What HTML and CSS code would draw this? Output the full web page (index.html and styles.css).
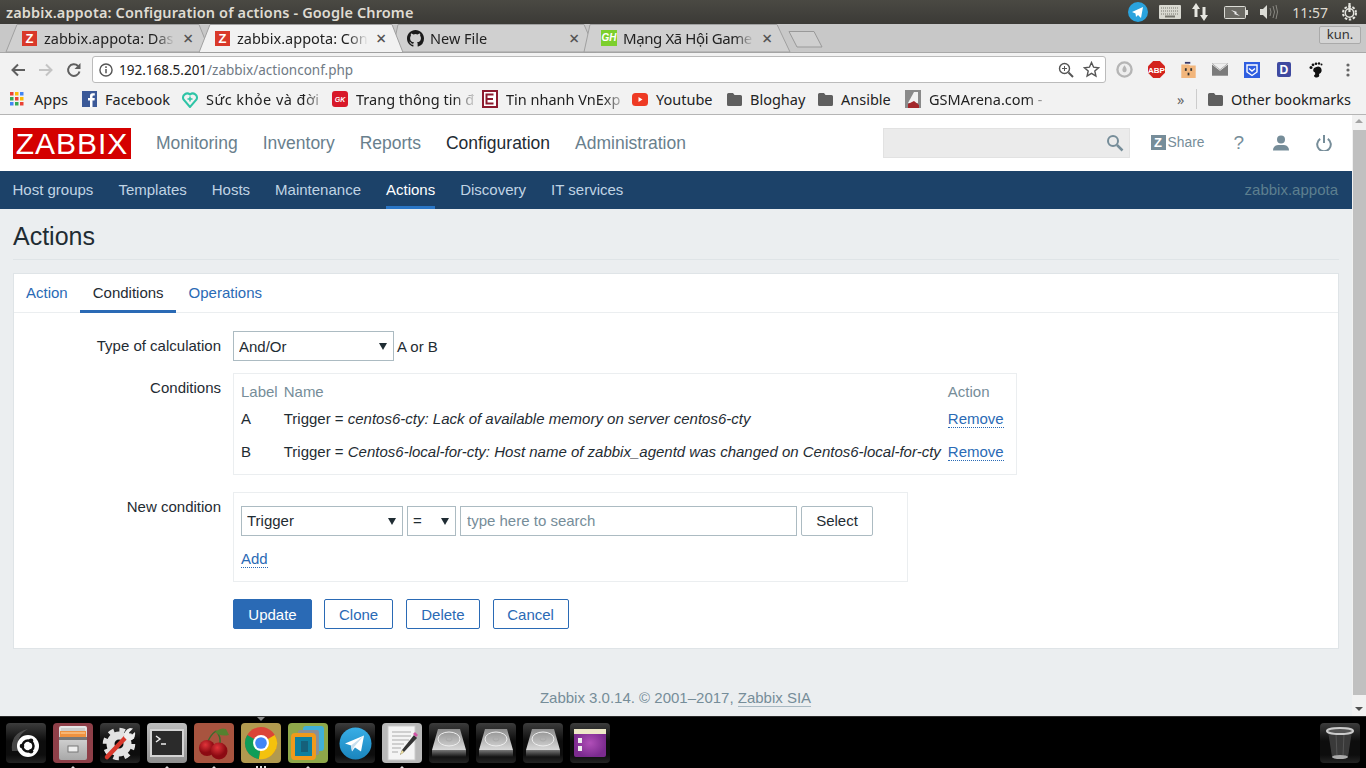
FILE: index.html
```html
<!DOCTYPE html>
<html>
<head>
    <title>zabbix.appota: Configuration of actions</title>
    <link rel="stylesheet" href="styles.css">
</head>
<body>

  <!-- shared gradients for the dock icons -->
  <svg class="defs" width="0" height="0">
    <defs>
      <linearGradient id="driveTop" x1="0" y1="0" x2="0" y2="1"><stop offset="0" stop-color="#8d8d8d"/><stop offset="1" stop-color="#e4e4e4"/></linearGradient>
      <linearGradient id="driveBase" x1="0" y1="0" x2="0" y2="1"><stop offset="0" stop-color="#777"/><stop offset="1" stop-color="#111"/></linearGradient>
      <radialGradient id="purple"><stop offset="0" stop-color="#b04fb8"/><stop offset="1" stop-color="#7c2b8f"/></radialGradient>
      <radialGradient id="cherry" cx=".4" cy=".3"><stop offset="0" stop-color="#e0343a"/><stop offset="1" stop-color="#8c0a12"/></radialGradient>
      <linearGradient id="tgBlue" x1="0" y1="0" x2="0" y2="1"><stop offset="0" stop-color="#38aee6"/><stop offset="1" stop-color="#1a85bd"/></linearGradient>
      <linearGradient id="cabinet" x1="0" y1="0" x2="0" y2="1"><stop offset="0" stop-color="#e8e8e8"/><stop offset="1" stop-color="#a8a8a8"/></linearGradient>
    </defs>
  </svg>

  <!-- desktop top panel -->
  <div class="panel">
    <div class="panel-title">zabbix.appota: Configuration of actions - Google Chrome</div>
    <div class="tray">
      <svg class="tray-ico" width="20" height="20" viewBox="0 0 20 20"><circle cx="10" cy="10" r="10" fill="#2aa3de"/><path d="M4 10l11-5-2 11-3-3-2 2-.5-3.500z" fill="#fff"/></svg>
      <svg class="tray-ico tray-kb" width="22" height="14" viewBox="0 0 22 14"><rect width="22" height="14" rx="1" fill="#d8d8d0"/><path d="M2 3h18M2 6h18M2 9h18" stroke="#77776f" stroke-dasharray="1 1"/><rect x="6" y="10.500" width="10" height="2" fill="#77776f"/></svg>
      <svg class="tray-ico tray-net" width="18" height="20" viewBox="0 0 18 20"><path d="M5 1l4 6H6.500v8h-3V7H1zM13 19l4-6h-2.500V5h-3v8H9z" fill="#e6e6e0"/></svg>
      <svg class="tray-ico tray-bat" width="24" height="13" viewBox="0 0 24 13"><rect x=".5" y=".5" width="21" height="12" rx="1" fill="#6b6a64" stroke="#dcdcd6"/><rect x="22" y="4" width="2" height="5" fill="#dcdcd6"/><path d="M7 4l6 2-1 1 4 3-6-2 1-1z" fill="#eee"/></svg>
      <svg class="tray-ico tray-vol" width="20" height="16" viewBox="0 0 20 16"><path d="M1 5h3l4-4v14l-4-4H1z" fill="#dcdcd6"/><path d="M11 4q2 4 0 8M14 2q3 6 0 12M17 1q3 7 0 14" stroke="#8b8a84" fill="none"/></svg>
      <span class="clock">11:57</span>
      <svg class="tray-ico tray-cog" width="17" height="18" viewBox="0 0 17 18"><circle cx="8.500" cy="10" r="6.500" fill="none" stroke="#e6e6e0" stroke-width="2" stroke-dasharray="2.500 1.600"/><circle cx="8.500" cy="10" r="4.200" fill="none" stroke="#e6e6e0" stroke-width="1.500"/><path d="M8.500 0v9" stroke="#e6e6e0" stroke-width="2.200"/></svg>
    </div>
  </div>

  <!-- tab strip -->
  <div class="tabstrip">
    <svg class="tabshapes" width="830" height="29" viewBox="0 0 830 29">
      <polygon points="6,28 17,.5 199,.5 210,28" fill="#d0d0d0" stroke="#a0a0a0"/>
      <polygon points="392,28 398,.5 584,.5 596,28" fill="#d0d0d0" stroke="#a0a0a0"/>
      <polygon points="584,28 590,.5 777,.5 790,28" fill="#d0d0d0" stroke="#a0a0a0"/>
      <polygon points="199,28.500 210,.5 392,.5 403,28.500" fill="#f2f2f2" stroke="#a0a0a0"/>
      <polygon points="789,7.500 814,7.500 822,23 797,23" fill="#cfcfcf" stroke="#999"/>
    </svg>
    <div class="tab">
      <span class="fav-z">Z</span><span class="tab-title">zabbix.appota: Das</span><span class="tab-x">×</span>
    </div>
    <div class="tab">
      <span class="fav-z">Z</span><span class="tab-title">zabbix.appota: Con</span><span class="tab-x">×</span>
    </div>
    <div class="tab">
      <svg class="fav" width="17" height="17" viewBox="0 0 16 16"><path fill="#1b1b1b" d="M8 0C3.580 0 0 3.580 0 8c0 3.540 2.290 6.530 5.470 7.590.4.070.55-.17.55-.38v-1.340c-2.230.48-2.690-1.070-2.690-1.070-.36-.92-.89-1.170-.89-1.170-.73-.5.050-.49.050-.49.800.06 1.230.820 1.230.820.710 1.220 1.870.870 2.330.660.070-.520.280-.870.510-1.070-1.780-.2-3.640-.890-3.640-3.950 0-.870.310-1.590.820-2.150-.080-.2-.360-1.020.080-2.120 0 0 .670-.210 2.200.820a7.600 7.600 0 0 1 4 0c1.530-1.040 2.200-.820 2.200-.820.440 1.100.160 1.920.080 2.120.510.560.820 1.270.820 2.150 0 3.070-1.870 3.750-3.650 3.950.290.250.540.730.540 1.480v2.190c0 .210.150.460.550.380A8 8 0 0 0 16 8c0-4.420-3.580-8-8-8z"/></svg><span class="tab-title">New File</span><span class="tab-x">×</span>
    </div>
    <div class="tab">
      <span class="fav-gh">GH</span><span class="tab-title tab-big">Mạng Xã Hội Game</span><span class="tab-x">×</span>
    </div>
    <div class="profile">kun.</div>
  </div>

  <!-- address bar -->
  <div class="toolbar">
    <svg class="nav-ico" width="16" height="16" viewBox="0 0 16 16"><path d="M15 8H3M8 2.500L2.500 8 8 13.500" fill="none" stroke="#5f5f5f" stroke-width="2"/></svg>
    <svg class="nav-ico" width="16" height="16" viewBox="0 0 16 16"><path d="M1 8h12M8 2.500L13.500 8 8 13.500" fill="none" stroke="#c4c4c4" stroke-width="2"/></svg>
    <svg class="nav-ico" width="16" height="16" viewBox="0 0 16 16"><path d="M13.500 9.500A5.800 5.800 0 1 1 12 4" fill="none" stroke="#5f5f5f" stroke-width="2"/><path d="M14.500 1v6h-6z" fill="#5f5f5f"/></svg>
    <div class="omnibox">
      <svg class="info" width="14" height="14" viewBox="0 0 15 15"><circle cx="7.500" cy="7.500" r="6.500" fill="none" stroke="#555" stroke-width="1.500"/><path d="M7.500 6.500v4.500M7.500 3.500v1.800" stroke="#555" stroke-width="1.600"/></svg>
      <span class="url">192.168.5.201<span class="url-path">/zabbix/actionconf.php</span></span>
      <svg class="box-ico" width="16" height="16" viewBox="0 0 16 16"><circle cx="6.500" cy="6.500" r="5" fill="none" stroke="#555" stroke-width="1.400"/><path d="M10.500 10.500L15 15" stroke="#555" stroke-width="2"/><path d="M4 6.500h5M6.500 4v5" stroke="#555"/></svg>
      <svg class="box-ico" width="17" height="17" viewBox="0 0 17 17"><path d="M8.500 1.500l2.100 4.700 5 .5-3.800 3.300 1.100 5-4.400-2.600L4.100 15l1.100-5L1.400 6.700l5-.5z" fill="none" stroke="#555" stroke-width="1.400"/></svg>
    </div>
    <div class="ext-row">
      <svg width="17" height="17" viewBox="0 0 18 18"><circle cx="9" cy="9" r="7.500" fill="#eee" stroke="#b5b5b5" stroke-width="2.500"/><path d="M9 4.500q3 4 2 6a2.200 2.200 0 0 1-4 0q-1-2 2-6z" fill="#b5b5b5"/></svg>
      <svg width="17" height="17" viewBox="0 0 18 18"><polygon points="5.500,0 12.500,0 18,5.500 18,12.500 12.500,18 5.500,18 0,12.500 0,5.500" fill="#d3231c"/><text x="9" y="12.500" class="abp">ABP</text></svg>
      <svg width="15" height="18" viewBox="0 0 16 20"><path d="M0 4h8l2 1h6v14H0z" fill="#f2b67c"/><rect x="4" y="1" width="6" height="2" fill="#3a3a6a"/><rect x="4" y="8" width="2" height="3" fill="#333"/><rect x="10" y="8" width="2" height="3" fill="#333"/><rect x="7" y="13" width="2" height="3" fill="#333"/></svg>
      <svg width="16" height="13" viewBox="0 0 18 14"><rect width="18" height="14" fill="#7c7c7c"/><path d="M0 0l9 7 9-7z" fill="#efefef"/><path d="M0 1l9 7 9-7" fill="none" stroke="#efefef"/></svg>
      <svg width="16" height="16" viewBox="0 0 16 16"><rect width="16" height="16" fill="#2f5ee0"/><path d="M3 3h10v7l-5 3.500L3 10z" fill="none" stroke="#fff" stroke-width="1.400"/><path d="M5 6.500l3 2.500 3-2.500" fill="none" stroke="#fff" stroke-width="1.400"/></svg>
      <svg width="14" height="15" viewBox="0 0 15 16"><rect width="15" height="16" rx="2" fill="#3f4aa0"/><text x="7.500" y="13" class="ext-d">D</text></svg>
      <svg width="14" height="16" viewBox="0 0 14 16"><path d="M5 6q5-3 7 0 2 4-2 6 1 3-2 3.500-3 0-3-2 2-1 1-3-3-1-1-4.500z" fill="#111"/><circle cx="2" cy="5.500" r="1.500" fill="#111"/><circle cx="4" cy="2.800" r="1.400" fill="#111"/><circle cx="7" cy="1.800" r="1.300" fill="#111"/><circle cx="10" cy="1.500" r="1.200" fill="#111"/><circle cx="12.500" cy="2.500" r="1" fill="#111"/></svg>
      <svg width="4" height="14" viewBox="0 0 4 14"><circle cx="2" cy="2" r="1.600" fill="#666"/><circle cx="2" cy="7" r="1.600" fill="#666"/><circle cx="2" cy="12" r="1.600" fill="#666"/></svg>
    </div>
  </div>

  <!-- bookmarks -->
  <div class="bookmarks">
    <div class="bm bm-apps">
      <svg width="14" height="14" viewBox="0 0 14 14"><rect width="3.500" height="3.500" fill="#ea4335"/><rect x="5" width="3.500" height="3.500" fill="#fbbc05"/><rect x="10" width="3.500" height="3.500" fill="#4285f4"/><rect y="5" width="3.500" height="3.500" fill="#34a853"/><rect x="5" y="5" width="3.500" height="3.500" fill="#ea4335"/><rect x="10" y="5" width="3.500" height="3.500" fill="#fbbc05"/><rect y="10" width="3.500" height="3.500" fill="#4285f4"/><rect x="5" y="10" width="3.500" height="3.500" fill="#34a853"/><rect x="10" y="10" width="3.500" height="3.500" fill="#ea4335"/></svg>
      <span>Apps</span>
    </div>
    <div class="bm bm-fb">
      <svg width="15" height="16" viewBox="0 0 15 16"><rect width="15" height="16" fill="#3b5998"/><path d="M10.500 16V9.500h2l.3-2.500h-2.300V5.500q0-1 1-1h1.300V2.300H10.500Q8 2.300 8 5v2H6v2.500h2V16z" fill="#fff"/></svg>
      <span>Facebook</span>
    </div>
    <div class="bm bm-sk">
      <svg width="16" height="18" viewBox="0 0 16 18"><path d="M8 17L1.500 9.500a4.200 4.200 0 0 1 6.500-5 4.200 4.200 0 0 1 6.500 5z" fill="none" stroke="#2ec4a6" stroke-width="2"/><path d="M8 6.500v5M5.500 9h5" stroke="#2ec4a6" stroke-width="1.500"/></svg>
      <span class="bm-fade">Sức khỏe và đời</span>
    </div>
    <div class="bm bm-tt">
      <svg width="16" height="16" viewBox="0 0 16 16"><rect width="16" height="16" rx="3" fill="#d8192a"/><text x="8" y="11" class="gk">GK</text></svg>
      <span class="bm-fade">Trang thông tin đ</span>
    </div>
    <div class="bm bm-vn">
      <svg width="16" height="18" viewBox="0 0 16 18"><rect x="1" y="1" width="14" height="16" fill="#fff" stroke="#8c1a2e" stroke-width="2"/><path d="M11.500 4.500h-7v9h7M5 9h6" fill="none" stroke="#8c1a2e" stroke-width="2"/></svg>
      <span class="bm-fade">Tin nhanh VnExp</span>
    </div>
    <div class="bm bm-yt">
      <svg width="16" height="13" viewBox="0 0 16 13"><rect width="16" height="13" rx="3.500" fill="#ee3a24"/><path d="M6.500 4v5l4-2.500z" fill="#fff"/></svg>
      <span>Youtube</span>
    </div>
    <div class="bm bm-bl">
      <svg width="15" height="13" viewBox="0 0 15 13"><path d="M0 1.500Q0 0 1.500 0H6l1.500 2h6Q15 2 15 3.500v8q0 1.500-1.500 1.500h-12Q0 13 0 11.500z" fill="#5f5f5f"/></svg>
      <span>Bloghay</span>
    </div>
    <div class="bm bm-an">
      <svg width="15" height="13" viewBox="0 0 15 13"><path d="M0 1.500Q0 0 1.500 0H6l1.500 2h6Q15 2 15 3.500v8q0 1.500-1.500 1.500h-12Q0 13 0 11.500z" fill="#5f5f5f"/></svg>
      <span>Ansible</span>
    </div>
    <div class="bm bm-gsm">
      <svg width="16" height="18" viewBox="0 0 16 18"><rect width="16" height="18" fill="#8a8a8a"/><path d="M3 13l6-11h4v11z" fill="#f2f2f2"/><path d="M3 14l6-3 5 4v3H3z" fill="#a3272b"/></svg>
      <span class="bm-fade">GSMArena.com -</span>
    </div>
    <div class="bm-more">»</div>
    <div class="bm-sep"></div>
    <div class="bm bm-other">
      <svg width="15" height="13" viewBox="0 0 15 13"><path d="M0 1.500Q0 0 1.500 0H6l1.500 2h6Q15 2 15 3.500v8q0 1.500-1.500 1.500h-12Q0 13 0 11.500z" fill="#5f5f5f"/></svg>
      <span>Other bookmarks</span>
    </div>
  </div>

  <!-- browser viewport with the zabbix page -->
  <div class="viewport">
    <div class="page">
      <header class="top-nav">
        <div class="logo">ZABBIX</div>
        <a class="top-item">Monitoring</a>
        <a class="top-item">Inventory</a>
        <a class="top-item">Reports</a>
        <a class="top-item top-active">Configuration</a>
        <a class="top-item">Administration</a>
        <div class="top-right">
          <div class="search">
            <svg width="18" height="18" viewBox="0 0 18 18"><circle cx="7" cy="7" r="5" fill="none" stroke="#768d99" stroke-width="2"/><path d="M11 11l5.500 5.500" stroke="#768d99" stroke-width="2.500"/></svg>
          </div>
          <div class="share"><span class="share-z">Z</span>Share</div>
          <div class="help">?</div>
          <svg class="user-ico" width="16" height="16" viewBox="0 0 16 16"><circle cx="8" cy="4.500" r="4" fill="#768d99"/><path d="M0 15.500q0-5 5-5.500h6q5 .5 5 5.500z" fill="#768d99"/></svg>
          <svg class="power-ico" width="16" height="16" viewBox="0 0 16 16"><path d="M4.200 3.800a6.800 6.800 0 1 0 7.600 0" fill="none" stroke="#768d99" stroke-width="2"/><path d="M8 0v8" stroke="#768d99" stroke-width="2"/></svg>
        </div>
      </header>

      <nav class="sub-nav">
        <a class="sub-item">Host groups</a>
        <a class="sub-item">Templates</a>
        <a class="sub-item">Hosts</a>
        <a class="sub-item">Maintenance</a>
        <a class="sub-item sub-active">Actions</a>
        <a class="sub-item">Discovery</a>
        <a class="sub-item">IT services</a>
        <span class="server-name">zabbix.appota</span>
      </nav>

      <main class="content">
        <h1 class="page-title">Actions</h1>

        <div class="card">
          <div class="card-tabs">
            <a class="card-tab">Action</a>
            <a class="card-tab card-tab-on">Conditions</a>
            <a class="card-tab">Operations</a>
          </div>

          <div class="form">
            <div class="form-label">Type of calculation</div>
            <div class="form-field calc-field">
              <div class="select-wrap select-calc"><select><option>And/Or</option></select></div>
              <span>A or B</span>
            </div>

            <div class="form-label">Conditions</div>
            <div class="form-field">
              <div class="box box-cond">
                <table class="cond-table">
                  <thead>
                    <tr><th>Label</th><th>Name</th><th>Action</th></tr>
                  </thead>
                  <tbody>
                    <tr>
                      <td>A</td>
                      <td>Trigger = <i>centos6-cty: Lack of available memory on server centos6-cty</i></td>
                      <td><a class="dotted">Remove</a></td>
                    </tr>
                    <tr>
                      <td>B</td>
                      <td>Trigger = <i>Centos6-local-for-cty: Host name of zabbix_agentd was changed on Centos6-local-for-cty</i></td>
                      <td><a class="dotted">Remove</a></td>
                    </tr>
                  </tbody>
                </table>
              </div>
            </div>

            <div class="form-label label-new">New condition</div>
            <div class="form-field">
              <div class="box box-new">
                <div class="new-row">
                  <div class="select-wrap select-trigger"><select><option>Trigger</option></select></div>
                  <div class="select-wrap select-eq"><select><option>=</option></select></div>
                  <input class="search-input" type="text" placeholder="type here to search">
                  <button class="btn btn-select">Select</button>
                </div>
                <a class="dotted add-link">Add</a>
              </div>
            </div>

            <div class="form-label"></div>
            <div class="form-field btn-row">
              <button class="btn btn-main">Update</button>
              <button class="btn">Clone</button>
              <button class="btn btn-gap">Delete</button>
              <button class="btn btn-gap btn-cancel">Cancel</button>
            </div>
          </div>
        </div>
      </main>

      <footer class="foot">Zabbix 3.0.14. © 2001–2017, <a class="foot-link">Zabbix SIA</a></footer>
    </div>

    <div class="scrollbar">
      <div class="arrow-up"></div>
      <div class="thumb"></div>
      <div class="arrow-down"></div>
    </div>
  </div>

  <!-- dock -->
  <div class="dock">
    <div class="tile tile-dark">
      <svg width="36" height="36" viewBox="0 0 36 36"><path d="M4 26Q2 8 20 4 8 10 10 26z" fill="#6a6a6a" opacity=".6"/><circle cx="20" cy="21" r="11" fill="#fff"/><circle cx="20" cy="21" r="5.500" fill="none" stroke="#111" stroke-width="2.500"/><circle cx="14" cy="21" r="2.300" fill="#111"/><circle cx="23" cy="15.800" r="2.300" fill="#111"/><circle cx="23" cy="26.200" r="2.300" fill="#111"/></svg>
    </div>
    <div class="tile tile-red running">
      <svg width="34" height="36" viewBox="0 0 34 36"><rect x="3" y="1" width="28" height="34" rx="2" fill="url(#cabinet)"/><rect x="5" y="3" width="24" height="3" fill="#ccc"/><rect x="4" y="6" width="26" height="6" fill="#ef9240"/><path d="M5 8h24" stroke="#ffd9a8"/><rect x="3" y="12" width="28" height="3" fill="#777"/><rect x="12" y="21" width="10" height="6" fill="#eee" stroke="#777"/></svg>
    </div>
    <div class="tile tile-dark">
      <svg width="36" height="36" viewBox="0 0 36 36"><circle cx="17" cy="19" r="8.500" fill="none" stroke="#e2e2e2" stroke-width="8"/><circle cx="17" cy="19" r="14" fill="none" stroke="#e2e2e2" stroke-width="4.500" stroke-dasharray="5.500 5.500"/><path d="M5 32L24 12" stroke="#d8382c" stroke-width="4.500" stroke-linecap="round"/><path d="M22 12q0-7 6-9l3 .5-4 4 2 3 4-3.500q1 5-3 8-3 1-5 0z" fill="#eee"/></svg>
    </div>
    <div class="tile tile-grey running">
      <svg width="34" height="28" viewBox="0 0 34 28"><rect x="1" y="1" width="32" height="26" fill="#2b2b2b" stroke="#d4d4d4" stroke-width="2"/><path d="M6 7l4 3-4 3" fill="none" stroke="#eee" stroke-width="1.500"/><path d="M11 15h5" stroke="#eee" stroke-width="1.500"/></svg>
    </div>
    <div class="tile tile-brick running">
      <svg width="34" height="34" viewBox="0 0 34 34"><path d="M10 18Q13 9 19 5M23 18Q24 10 19 5" fill="none" stroke="#3d6a2e" stroke-width="1.500"/><path d="M18 6q6-5 11-3 2 4 3 6-9 2-14-3z" fill="#55802f"/><circle cx="10" cy="22" r="8" fill="url(#cherry)"/><circle cx="22" cy="25" r="8.500" fill="url(#cherry)"/></svg>
    </div>
    <div class="tile tile-olive running-3">
      <svg width="34" height="34" viewBox="0 0 32 32"><circle cx="16" cy="16" r="15" fill="#db4437"/><path d="M16 16L29 8.500A15 15 0 0 1 14 31z" fill="#f4c20d"/><path d="M16 16L14 31A15 15 0 0 1 3 8.500z" fill="#0f9d58"/><circle cx="16" cy="16" r="7.500" fill="#fff"/><circle cx="16" cy="16" r="5.500" fill="#4285f4"/></svg>
    </div>
    <div class="tile tile-green running">
      <svg width="34" height="36" viewBox="0 0 34 36"><rect x="12" y="1" width="21" height="25" fill="#41b0d8" rx="3"/><rect x="7" y="5" width="21" height="25" fill="#8b8f95" rx="2"/><rect x="2" y="10" width="21" height="23" fill="#0e7f9e" stroke="#f09a1c" stroke-width="4" rx="2"/><rect x="10" y="16" width="7" height="11" fill="#15607a"/></svg>
    </div>
    <div class="tile tile-dark">
      <svg width="33" height="33" viewBox="0 0 33 33"><circle cx="16.500" cy="16.500" r="16" fill="url(#tgBlue)"/><path d="M6 16.500l19-8-3 16-6-4-3 4-1-6z" fill="#fff"/><path d="M12 18.500L25 8.500 15 20l-2 4z" fill="#c8dfee"/></svg>
    </div>
    <div class="tile tile-light running">
      <svg width="34" height="36" viewBox="0 0 34 36"><rect x="3" y="1" width="27" height="34" fill="#f4f4f4" stroke="#ccc"/><path d="M7 7h19M7 11h19M7 15h17M7 19h12M7 23h9M7 27h6" stroke="#aaa"/><path d="M15 30l2-5L29 10l3 3-13 14z" fill="#333"/><path d="M15 30l2-5 2 2z" fill="#eee0a0"/><path d="M28 9l3 3 2-2-3-3z" fill="#d054a4"/></svg>
    </div>
    <div class="tile tile-dark">
      <svg width="36" height="30" viewBox="0 0 36 30"><path d="M7 1h22l6 21v3H1v-3z" fill="url(#driveTop)"/><rect x="1" y="22" width="34" height="7" fill="url(#driveBase)"/><ellipse cx="18" cy="11" rx="11" ry="7" fill="none" stroke="#eee"/><ellipse cx="18" cy="11" rx="3" ry="2" fill="none" stroke="#aaa"/></svg>
    </div>
    <div class="tile tile-dark">
      <svg width="36" height="30" viewBox="0 0 36 30"><path d="M7 1h22l6 21v3H1v-3z" fill="url(#driveTop)"/><rect x="1" y="22" width="34" height="7" fill="url(#driveBase)"/><ellipse cx="18" cy="11" rx="11" ry="7" fill="none" stroke="#eee"/><ellipse cx="18" cy="11" rx="3" ry="2" fill="none" stroke="#aaa"/></svg>
    </div>
    <div class="tile tile-dark">
      <svg width="36" height="30" viewBox="0 0 36 30"><path d="M7 1h22l6 21v3H1v-3z" fill="url(#driveTop)"/><rect x="1" y="22" width="34" height="7" fill="url(#driveBase)"/><ellipse cx="18" cy="11" rx="11" ry="7" fill="none" stroke="#eee"/><ellipse cx="18" cy="11" rx="3" ry="2" fill="none" stroke="#aaa"/></svg>
    </div>
    <div class="tile tile-dark">
      <svg width="34" height="30" viewBox="0 0 34 30"><rect x="1" y="1" width="32" height="28" rx="2" fill="url(#purple)"/><rect x="1" y="1" width="32" height="5" fill="#eee8c8"/><rect x="5" y="10" width="4" height="5" fill="#eee"/><rect x="5" y="18" width="4" height="5" fill="#eee"/></svg>
    </div>
    <div class="tile tile-dark tile-trash">
      <svg width="30" height="34" viewBox="0 0 30 34"><path d="M3 5l4 26h16l4-26z" fill="#3a3a3a"/><path d="M11 8l1 22M19 8l-1 22" stroke="#555"/><ellipse cx="15" cy="5" rx="13" ry="3" fill="#555" stroke="#ccc" stroke-width="2"/><ellipse cx="15" cy="31" rx="8" ry="2" fill="#aaa"/></svg>
    </div>
  </div>

</body>
</html>
```

FILE: styles.css
```css
html, body {
    margin: 0;
    height: 100%;
    overflow: hidden;
}

body {
    display: flex;
    flex-direction: column;
    height: 768px;
    font-family: "Liberation Sans", Arial, sans-serif;
    background: #000;
}

.defs {
    position: absolute;
}

/* desktop panel */
.panel {
    height: 24px;
    flex: none;
    display: flex;
    align-items: center;
    padding: 0 0 0 6px;
    background: linear-gradient(#4a4943, #3b3a36);
    color: #dfdbd2;
}

.panel-title {
    font-family: "Noto Sans", sans-serif;
    font-size: 14.500px;
    font-weight: 600;
    letter-spacing: 0.13px;
    white-space: nowrap;
}

.tray {
    margin-left: auto;
    display: flex;
    align-items: center;
    padding-right: 8px;
}

.tray-ico {
    flex: none;
}

.tray-kb { margin-left: 11px; }
.tray-net { margin-left: 10px; }
.tray-bat { margin-left: 15px; }
.tray-vol { margin-left: 11px; }
.tray-cog { margin-left: 13px; }

.clock {
    font-family: "Noto Sans", sans-serif;
    font-size: 14px;
    color: #dfdbd2;
    margin-left: 13px;
}

/* chrome tabs */
.tabstrip {
    position: relative;
    height: 29px;
    flex: none;
    display: flex;
    padding-left: 22px;
    background: #c8c8c8;
    border-bottom: 1px solid #a8a8a8;
    box-sizing: border-box;
    font-family: "Noto Sans", sans-serif;
}

.tabshapes {
    position: absolute;
    left: 0;
    top: 0;
}

.tab {
    position: relative;
    width: 193px;
    display: flex;
    align-items: center;
    font-size: 14.500px;
    color: #222;
    flex: none;
}

.fav-z {
    width: 15px;
    height: 15px;
    margin-right: 7px;
    background: #d9392a;
    color: #fff;
    font: bold 13px/15px "Liberation Sans", sans-serif;
    text-align: center;
    flex: none;
}

.fav {
    margin: 0 6px 0 -1px;
    flex: none;
}

.fav-gh {
    width: 16px;
    height: 16px;
    margin-right: 6px;
    background: #7ccf2c;
    color: #fff;
    font: italic bold 10px/16px "Liberation Sans", sans-serif;
    text-align: center;
    flex: none;
}

.tab-title {
    width: 131px;
    flex: none;
    white-space: nowrap;
    overflow: hidden;
    -webkit-mask-image: linear-gradient(90deg, #000 85%, transparent);
    mask-image: linear-gradient(90deg, #000 85%, transparent);
}

.tab-big {
    font-size: 15px;
    letter-spacing: -0.4px;
}

.tab-x {
    margin-left: 8px;
    font-size: 18px;
    font-weight: 500;
    color: #555;
}

.profile {
    position: absolute;
    right: 5px;
    top: 2px;
    width: 40px;
    height: 16px;
    border: 1px solid #aaa;
    border-radius: 2px;
    background: #d4d4d4;
    font-size: 13px;
    line-height: 15px;
    text-align: center;
    color: #333;
}

/* toolbar */
.toolbar {
    height: 33px;
    flex: none;
    display: flex;
    align-items: center;
    padding-left: 10px;
    background: #f2f2f2;
    box-sizing: border-box;
    font-family: "Noto Sans", sans-serif;
}

.nav-ico {
    margin-right: 12px;
    flex: none;
}

.omnibox {
    width: 1014px;
    height: 27px;
    margin-left: -2px;
    display: flex;
    align-items: center;
    box-sizing: border-box;
    padding: 0 5px 0 6px;
    background: #fff;
    border: 1px solid #bbb;
    border-radius: 3px;
    flex: none;
}

.info {
    margin-right: 6px;
}

.url {
    font-size: 13.500px;
    color: #222;
    margin-right: auto;
}

.url-path {
    color: #6f7a85;
}

.box-ico {
    margin-left: 9px;
}

.ext-row {
    margin-left: 2px;
    display: grid;
    grid-auto-flow: column;
    grid-auto-columns: 32px;
    justify-items: center;
    align-items: center;
}

.abp {
    font: bold 8.500px "Liberation Sans", sans-serif;
    fill: #fff;
    text-anchor: middle;
}

.ext-d {
    font: bold 13px "Liberation Sans", sans-serif;
    fill: #fff;
    text-anchor: middle;
}

.gk {
    font: italic bold 7px "Liberation Sans", sans-serif;
    fill: #fff;
    text-anchor: middle;
}

/* bookmarks */
.bookmarks {
    position: relative;
    height: 29px;
    flex: none;
    display: flex;
    align-items: center;
    padding: 0 0 2px 10px;
    background: #f2f2f2;
    border-bottom: 1px solid #b5b5b5;
    box-sizing: border-box;
    font-family: "Noto Sans", sans-serif;
    font-size: 14.500px;
    color: #222;
}

.bm {
    display: flex;
    align-items: center;
    gap: 8px;
    flex: none;
    white-space: nowrap;
}

.bm-apps { width: 72px; gap: 10px; }
.bm-fb { width: 100px; }
.bm-sk { width: 150px; }
.bm-tt { width: 150px; }
.bm-vn { width: 150px; }
.bm-yt { width: 95px; }
.bm-bl { width: 91px; }
.bm-an { width: 87px; }
.bm-gsm { width: 272px; }

.bm-fade {
    width: 122px;
    overflow: hidden;
    -webkit-mask-image: linear-gradient(90deg, #000 80%, transparent);
    mask-image: linear-gradient(90deg, #000 80%, transparent);
}

.bm-sk .bm-fade {
    letter-spacing: 0.45px;
}

.bm-more {
    width: 19px;
    color: #666;
}

.bm-sep {
    width: 1px;
    height: 20px;
    margin-right: 11px;
    background: #ccc;
}

/* zabbix page */
.viewport {
    height: 601px;
    flex: none;
    display: flex;
    background: #ebeef0;
    overflow: hidden;
}

.page {
    width: 1352px;
    flex: none;
    display: flex;
    flex-direction: column;
    font-size: 15px;
    color: #1f2c33;
}

.top-nav {
    height: 56px;
    flex: none;
    display: flex;
    align-items: center;
    padding: 0 13px;
    background: #fff;
    box-sizing: border-box;
}

.logo {
    width: 118px;
    height: 31px;
    margin-right: 25px;
    background: #d40000;
    color: #fff;
    font-size: 30px;
    line-height: 31px;
    text-align: center;
    letter-spacing: 1px;
    flex: none;
}

.top-item {
    margin-right: 25px;
    font-size: 17.500px;
    color: #69808d;
}

.top-active {
    color: #1f2c33;
}

.top-right {
    margin-left: auto;
    display: flex;
    align-items: center;
}

.search {
    width: 247px;
    height: 30px;
    display: flex;
    align-items: center;
    justify-content: flex-end;
    padding-right: 5px;
    background: #ebebeb;
    border: 1px solid #e2e2e2;
    box-sizing: border-box;
}

.share {
    margin-left: 21px;
    padding-bottom: 1px;
    display: flex;
    align-items: center;
    font-size: 13.800px;
    color: #768d99;
}

.share-z {
    width: 15px;
    height: 15px;
    margin-right: 2px;
    background: #768d99;
    color: #fff;
    font-size: 13px;
    font-weight: bold;
    line-height: 15px;
    text-align: center;
}

.help {
    margin-left: 29px;
    font-size: 19px;
    color: #768d99;
}

.user-ico {
    margin-left: 29px;
}

.power-ico {
    margin-left: 27px;
    margin-right: 7px;
}

.sub-nav {
    height: 38px;
    flex: none;
    display: flex;
    align-items: stretch;
    padding: 0 14px 0 12.500px;
    background: #1c4269;
    box-sizing: border-box;
}

.sub-item {
    margin-right: 25px;
    line-height: 37px;
    color: #c0d4e4;
}

.sub-active {
    color: #fff;
    border-bottom: 3px solid #2a76c6;
    height: 35px;
}

.server-name {
    margin-left: auto;
    line-height: 37px;
    color: #5d7f8f;
}

.content {
    flex: 1;
    padding: 0 13px;
}

.page-title {
    margin: 0 0 13px;
    height: 51px;
    border-bottom: 1px solid #dfe4e7;
    font-size: 25px;
    font-weight: normal;
    line-height: 54px;
    box-sizing: border-box;
}

.card {
    height: 376px;
    background: #fff;
    border: 1px solid #dfe4e7;
    box-sizing: border-box;
}

.card-tabs {
    height: 39px;
    display: flex;
    border-bottom: 1px solid #ebeef0;
    box-sizing: border-box;
}

.card-tab {
    padding: 0 12.500px;
    line-height: 37px;
    color: #2a6ab5;
}

.card-tab:first-child {
    padding-left: 12px;
}

.card-tab-on {
    color: #1f2c33;
    border-bottom: 3px solid #2a6ab5;
    height: 36px;
}

.form {
    display: grid;
    grid-template-columns: 207px auto;
    column-gap: 12px;
    row-gap: 12px;
    padding-top: 18px;
    justify-content: start;
}

.form-label {
    text-align: right;
    line-height: 30px;
}

.form-field {
    display: flex;
    align-items: flex-start;
}

.calc-field {
    align-items: center;
    gap: 3px;
}

.select-wrap {
    position: relative;
    height: 30px;
    flex: none;
}

.select-wrap::after {
    content: "";
    position: absolute;
    right: 7px;
    top: 12px;
    border-left: 4px solid transparent;
    border-right: 4px solid transparent;
    border-top: 7px solid #1f2c33;
    pointer-events: none;
}

.select-wrap select {
    width: 100%;
    height: 100%;
    padding: 0 5px;
    background: #fff;
    border: 1px solid #acbbc2;
    border-radius: 0;
    font: 15px "Liberation Sans", Arial, sans-serif;
    color: #1f2c33;
    appearance: none;
    -webkit-appearance: none;
}

.select-calc { width: 161px; }
.select-trigger { width: 162px; }
.select-eq { width: 49px; }

.box {
    border: 1px solid #ebeef0;
    box-sizing: border-box;
    padding: 0 7px;
}

.box-cond {
    width: 784px;
    height: 102px;
}

.box-new {
    width: 675px;
    height: 90px;
    margin-top: 5px;
    padding-top: 13px;
}

.label-new {
    margin-top: 5px;
}

.cond-table {
    border-collapse: collapse;
    margin-top: 6px;
    font-size: 15px;
    white-space: nowrap;
}

.cond-table th {
    height: 22px;
    padding: 0 7px 0 0;
    font-weight: normal;
    text-align: left;
    color: #768d99;
}

.cond-table td {
    height: 33px;
    padding: 0 7px 0 0;
}

.cond-table th:first-child,
.cond-table td:first-child {
    width: 35px;
    padding-right: 6px;
}

.dotted {
    color: #2a6ab5;
    border-bottom: 1px dotted #2a6ab5;
}

.new-row {
    display: flex;
    gap: 4px;
}

/* text in this row sits a pixel higher than in the calculation select */
.new-row select,
.new-row .search-input,
.new-row .btn-select {
    padding-bottom: 2px;
}

.search-input {
    width: 337px;
    height: 30px;
    padding: 0 6px;
    border: 1px solid #acbbc2;
    box-sizing: border-box;
    font: 15px "Liberation Sans", Arial, sans-serif;
}

.search-input::placeholder {
    color: #768d99;
    opacity: 1;
}

.add-link {
    display: inline-block;
    margin-top: 14px;
    line-height: 17px;
}

.btn {
    height: 30px;
    padding: 0 14px;
    background: #fff;
    border: 1px solid #2a6ab5;
    border-radius: 2px;
    font: 15px "Liberation Sans", Arial, sans-serif;
    color: #2a6ab5;
}

.btn-select {
    border-color: #acbbc2;
    color: #1f2c33;
    width: 72px;
}

.btn-main {
    width: 79px;
    background: #2a6ab5;
    color: #fff;
}

.btn-gap {
    margin-left: 1px;
}

.btn-cancel {
    width: 76px;
    padding: 0;
}

.btn-row {
    gap: 12px;
    margin-top: 5px;
}

.foot {
    height: 36px;
    flex: none;
    padding-right: 1px;
    text-align: center;
    font-size: 15px;
    color: #768d99;
    line-height: 36px;
}

.foot-link {
    border-bottom: 1px solid #a9b9c2;
}

.scrollbar {
    width: 14px;
    flex: none;
    display: flex;
    flex-direction: column;
    align-items: center;
    background: #f1f1f1;
    padding: 4px 0 5px;
    box-sizing: border-box;
}

.arrow-up {
    border-left: 4px solid transparent;
    border-right: 4px solid transparent;
    border-bottom: 4px solid #a3a3a3;
}

.thumb {
    width: 13px;
    height: 565px;
    margin: 7px 0 auto;
    align-self: flex-end;
    background: #c0c0c0;
}

.arrow-down {
    border-left: 4px solid transparent;
    border-right: 4px solid transparent;
    border-top: 4px solid #505050;
}

/* dock */
.dock {
    position: relative;
    flex: 1;
    display: flex;
    gap: 7px;
    padding: 6px 0 0 6px;
    border-top: 1px solid #2a2a2a;
    box-sizing: border-box;
    background: #000;
}

.tile {
    position: relative;
    width: 40px;
    height: 40px;
    display: flex;
    align-items: center;
    justify-content: center;
    border-radius: 4px;
    flex: none;
}

.tile-dark { background: linear-gradient(#3c3c3c, #0d0d0d 45%, #0d0d0d 80%, #242424); }
.tile-red { background: #8e3f48; }
.tile-grey { background: linear-gradient(#bdbdbd, #8f8f8f); }
.tile-brick { background: #a8543f; }
.tile-olive { background: #b29a4f; }
.tile-green { background: #8fa84a; }
.tile-light { background: #b9b9b9; }

.running::after {
    content: "";
    position: absolute;
    left: 17px;
    bottom: -6px;
    border-left: 3px solid transparent;
    border-right: 3px solid transparent;
    border-bottom: 3px solid #ddd;
}

/* chrome: three pips below, focus mark above */
.running-3::after {
    content: "";
    position: absolute;
    left: 15px;
    bottom: -6px;
    width: 2px;
    height: 3px;
    background: #ddd;
    box-shadow: 4px 0 #ddd, 8px 0 #ddd;
}

.running-3::before {
    content: "";
    position: absolute;
    left: 16px;
    top: -6px;
    border-left: 4px solid transparent;
    border-right: 4px solid transparent;
    border-top: 4px solid #888;
}

.tile-trash {
    margin-left: auto;
    margin-right: 6px;
}
```
